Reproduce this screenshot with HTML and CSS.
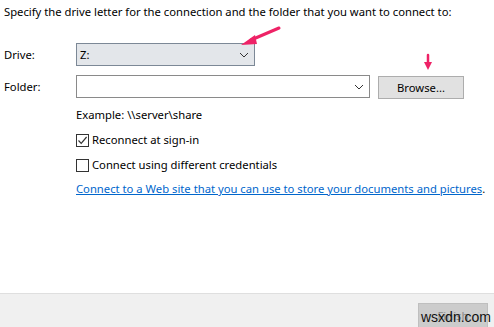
FILE: index.html
```html
<!DOCTYPE html>
<html lang="en">
<head>
  <meta charset="UTF-8">
  <title>Map Network Drive</title>
  <link rel="stylesheet" href="styles.css">
</head>
<body>
  <div class="dialog">
    <div class="dialog-body">
      <div class="intro">Specify the drive letter for the connection and the folder that you want to connect to:</div>

      <div class="form-grid">
        <label class="field-label">Drive:</label>
        <div class="field-row">
          <div class="combo combo-drive">
            <span class="combo-value">Z:</span>
            <svg class="chevron" width="10" height="6" viewBox="0 0 10 6"><path d="M1 1 L5 5 L9 1" fill="none" stroke="#333" stroke-width="1"/></svg>
          </div>
        </div>

        <label class="field-label">Folder:</label>
        <div class="field-row">
          <div class="combo combo-folder">
            <span class="combo-value"></span>
            <svg class="chevron" width="10" height="6" viewBox="0 0 10 6"><path d="M1 1 L5 5 L9 1" fill="none" stroke="#333" stroke-width="1"/></svg>
          </div>
          <button class="btn">Browse...</button>
        </div>

        <div></div>
        <div class="options">
          <div class="example">Example: \\server\share</div>
          <div class="check-row">
            <span class="checkbox">
              <svg width="11" height="11" viewBox="0 0 11 11"><path d="M1.5 5.5 L4.2 8.3 L9.6 2" fill="none" stroke="#333" stroke-width="1.2"/></svg>
            </span>
            Reconnect at sign-in
          </div>
          <div class="check-row">
            <span class="checkbox"></span>
            Connect using different credentials
          </div>
          <div class="link-row"><a class="link" href="#">Connect to a Web site that you can use to store your documents and pictures</a>.</div>
        </div>
      </div>
    </div>

    <div class="dialog-footer">
      <button class="btn btn-finish" disabled>Finish</button>
    </div>

    <svg class="annotations" width="494" height="327" viewBox="0 0 494 327">
      <path d="M279 28 L251 40" stroke="#ee2266" stroke-width="3" stroke-linecap="round"/>
      <path d="M241 45 L255 35 L257 44 Z" fill="#ee2266"/>
      <path d="M428 55 L428 63" stroke="#ee2266" stroke-width="2.5" stroke-linecap="round"/>
      <path d="M424 62 L432 62 L428 70 Z" fill="#ee2266"/>
    </svg>
    <div class="watermark">wsxdn.com</div>
  </div>
</body>
</html>
```

FILE: styles.css
```css
* {
  margin: 0;
  padding: 0;
  box-sizing: border-box;
}

body {
  font-family: 'Noto Sans', 'Open Sans', sans-serif;
  font-size: 11.25px;
  color: #000;
  background-color: #fff;
  overflow: hidden;
}

.dialog {
  position: relative;
  display: flex;
  flex-direction: column;
  width: 494px;
  height: 327px;
}

.dialog-body {
  flex-grow: 1;
  padding: 4px 0 0 4px;
}

.intro {
  line-height: 16px;
  white-space: nowrap;
}

.form-grid {
  display: grid;
  grid-template-columns: 72px auto;
  row-gap: 8px;
  margin-top: 23px;
}

.field-label {
  display: flex;
  align-items: center;
}

.field-row {
  display: flex;
  align-items: center;
  gap: 8px;
}

.combo {
  height: 23px;
  border: 1px solid #7a7a7a;
  display: flex;
  align-items: center;
  justify-content: space-between;
  padding: 0 5px 0 3px;
}

.combo-drive {
  width: 179px;
  background-color: #e3e6ea;
  border-color: #7c8896;
}

.combo-folder {
  width: 294px;
  background-color: #fff;
  border-color: #8a8a8a;
}

.chevron {
  margin-top: 1px;
}

.btn {
  font-family: inherit;
  font-size: 11.25px;
  background-color: #e1e1e1;
  border: 1px solid #adadad;
  height: 23px;
  width: 86px;
  margin-top: 2px;
  color: #000;
}

.options {
  display: flex;
  flex-direction: column;
}

.example {
  line-height: 16px;
}

.check-row {
  display: flex;
  align-items: center;
  gap: 3px;
  margin-top: 9px;
  line-height: 16px;
}

.check-row + .check-row {
  margin-top: 9px;
}

.checkbox {
  width: 13px;
  height: 13px;
  border: 1px solid #333;
  background-color: #fff;
  display: flex;
  align-items: center;
  justify-content: center;
}

.link-row {
  margin-top: 8px;
  line-height: 16px;
  white-space: nowrap;
}

.link {
  color: #0066cc;
  text-decoration: underline;
}

.dialog-footer {
  height: 34px;
  background-color: #f0f0f0;
  border-top: 1px solid #dfdfdf;
  display: flex;
  justify-content: flex-end;
  padding: 9px 6px 0 0;
}

.btn-finish {
  width: 70px;
  height: 25px;
  margin-top: 0;
  background-color: #cccccc;
  border-color: #bfbfbf;
  color: #8a8a8a;
}

.annotations {
  position: absolute;
  left: 0;
  top: 0;
  pointer-events: none;
}

.watermark {
  position: absolute;
  left: 421px;
  top: 309px;
  font-family: 'Liberation Sans', sans-serif;
  font-size: 14px;
  color: #111;
}
```
